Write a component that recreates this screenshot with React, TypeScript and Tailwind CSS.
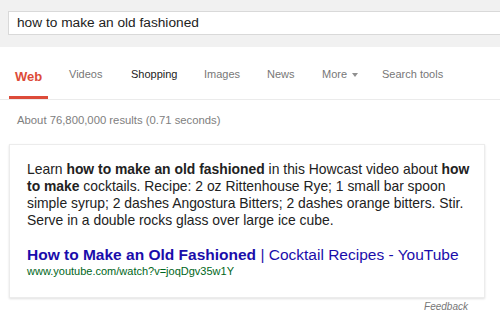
import React from 'react';

const tabs = [
  { label: 'Videos', cls: 'w-[62px] text-[#777]' },
  { label: 'Shopping', cls: 'w-[73px] text-[#222]' },
  { label: 'Images', cls: 'w-[63px] text-[#777]' },
  { label: 'News', cls: 'w-[55px] text-[#777]' },
];

function App() {
  return (
    <div className="w-[500px] h-[314px] overflow-hidden bg-white font-['Liberation_Sans',Arial,sans-serif]">
      {/* search header */}
      <div className="h-[47px] bg-[#f1f1f1] pt-[11px] pl-[8px]">
        <div className="h-[24px] bg-white border border-[#d9d9d9] border-r-0 flex items-center pl-[8px] text-[13.7px] text-[#222]">
          how to make an old fashioned
        </div>
      </div>

      {/* tabs */}
      <div className="h-[53px] border-b border-[#ebebeb] flex pl-[9px]">
        <div className="w-[39px] flex flex-col items-center justify-end">
          <span className="text-[13px] leading-[15px] text-[#dd4b39] font-bold pb-[12px]">Web</span>
          <div className="w-full h-[3px] bg-[#dd4b39]" />
        </div>
        <div className="flex items-center pl-[21px] pt-[3px] text-[11px]">
          {tabs.map((t) => (
            <span key={t.label} className={t.cls}>
              {t.label}
            </span>
          ))}
          <span className="w-[60px] text-[#777] flex items-center">
            More
            <span className="ml-[5px] w-0 h-0 border-l-[3px] border-r-[3px] border-t-[4px] border-l-transparent border-r-transparent border-t-[#909090]" />
          </span>
          <span className="text-[#777]">Search tools</span>
        </div>
      </div>

      <div className="pl-[17px] pt-[14px] text-[11.3px] leading-[13px] text-[#808080]">
        About 76,800,000 results (0.71 seconds)
      </div>

      {/* answer card */}
      <div className="ml-[9px] mt-[17px] w-[476px] bg-white border border-[#ececec] shadow-[0_1px_2px_rgba(0,0,0,0.12)] pl-[17px] pr-[12px] pt-[16px] pb-[19px]">
        <p className="text-[13.9px] leading-[17px] text-[#222]">
          Learn <b>how to make an old fashioned</b> in this Howcast video about <b>how to make</b> cocktails. Recipe: 2 oz Rittenhouse Rye; 1 small bar spoon simple syrup; 2 dashes Angostura Bitters; 2 dashes orange bitters. Stir. Serve in a double rocks glass over large ice cube.
        </p>
        <div className="mt-[17px] text-[15.5px] leading-[18px] text-[#1a0dab] whitespace-nowrap">
          <b>How to Make an Old Fashioned</b> | Cocktail Recipes - YouTube
        </div>
        <div className="text-[11px] leading-[14px] text-[#006621]">
          www.youtube.com/watch?v=joqDgv35w1Y
        </div>
      </div>

      <div className="w-[468px] text-right text-[10px] leading-[12px] italic text-[#777] mt-[3px]">
        Feedback
      </div>
    </div>
  );
}

export default App;
